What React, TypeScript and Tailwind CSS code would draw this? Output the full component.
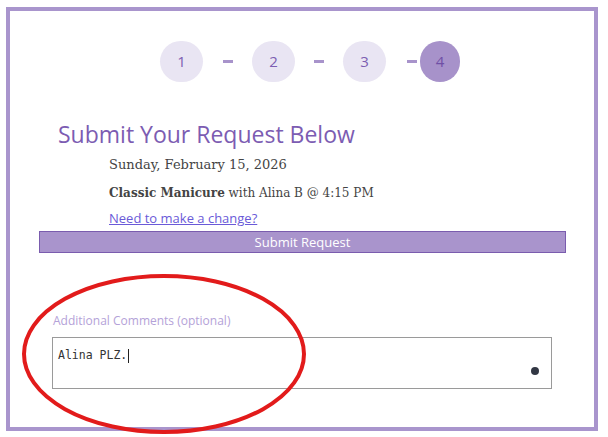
import React from "react";

const sans = { fontFamily: '"Open Sans", "Noto Sans", sans-serif' };

function Step({ n, active }: { n: number; active?: boolean }) {
  return (
    <div
      className={
        active
          ? "flex h-[41px] w-[40px] items-center justify-center rounded-full bg-[#a792ca] text-[15px] text-[#6f4fa6]"
          : "flex h-[41px] w-[43px] items-center justify-center rounded-full bg-[#e9e5f3] text-[15px] text-[#7d5eb2]"
      }
    >
      {n}
    </div>
  );
}

function Dash() {
  return <div className="h-[3px] w-[10px] bg-[#a893cb]" />;
}

export default function App() {
  return (
    <div className="relative h-[437px] w-[608px] overflow-hidden bg-white" style={sans}>
      <div className="ml-[6px] mt-[7px] h-[424px] w-[592px] border-4 border-[#a995cd] bg-white">
        {/* progress steps */}
        <div className="ml-[150px] mt-[30px] flex items-center">
          <Step n={1} />
          <div className="ml-[20px] mr-[19px]"><Dash /></div>
          <Step n={2} />
          <div className="ml-[19px] mr-[19px]"><Dash /></div>
          <Step n={3} />
          <div className="ml-[21px] mr-[3px]"><Dash /></div>
          <Step n={4} active />
        </div>

        <h1 className="ml-[48px] mt-[38px] text-[23px] leading-[28px] text-[#7c5cb2]">
          Submit Your Request Below
        </h1>

        <div
          className="ml-[99px] text-[#444]"
          style={{ fontFamily: '"DejaVu Serif", "Liberation Serif", serif' }}
        >
          <p className="mt-[7px] text-[13px] leading-[20px]">Sunday, February 15, 2026</p>
          <p className="mt-[8px] text-[12px] leading-[20px]">
            <b>Classic Manicure</b> with Alina B @ 4:15 PM
          </p>
        </div>
        <a href="#" className="ml-[99px] mt-[6px] block text-[13px] leading-[18px] text-[#6a5ad8] underline">
          Need to make a change?
        </a>

        <button className="ml-[29px] mt-[4px] block h-[22px] w-[527px] border border-[#7a5cae] bg-[#a994cc] text-[13px] leading-[18px] text-white">
          Submit Request
        </button>

        <label className="ml-[43px] mt-[60px] block text-[12px] leading-[16px] text-[#b4a2d8]">
          Additional Comments (optional)
        </label>
        <div
          className="relative ml-[42px] mt-[8px] h-[52px] w-[500px] border border-[#9a9a9a] px-[5px] pt-[9px] text-[11.5px] leading-[16px] text-[#333]"
          style={{ fontFamily: '"DejaVu Sans Mono", "Liberation Mono", monospace' }}
        >
          <span>Alina PLZ.</span>
          <span className="ml-px inline-block h-[14px] w-px bg-[#222] align-middle" />
          <span className="absolute right-[12px] top-[29px] h-[8px] w-[8px] rounded-full bg-[#323744]" />
        </div>
      </div>

      {/* red annotation */}
      <svg className="pointer-events-none absolute left-0 top-0" width="608" height="437">
        <ellipse cx="164" cy="354" rx="140" ry="78" fill="none" stroke="#e21b1b" strokeWidth="4" />
      </svg>
    </div>
  );
}
